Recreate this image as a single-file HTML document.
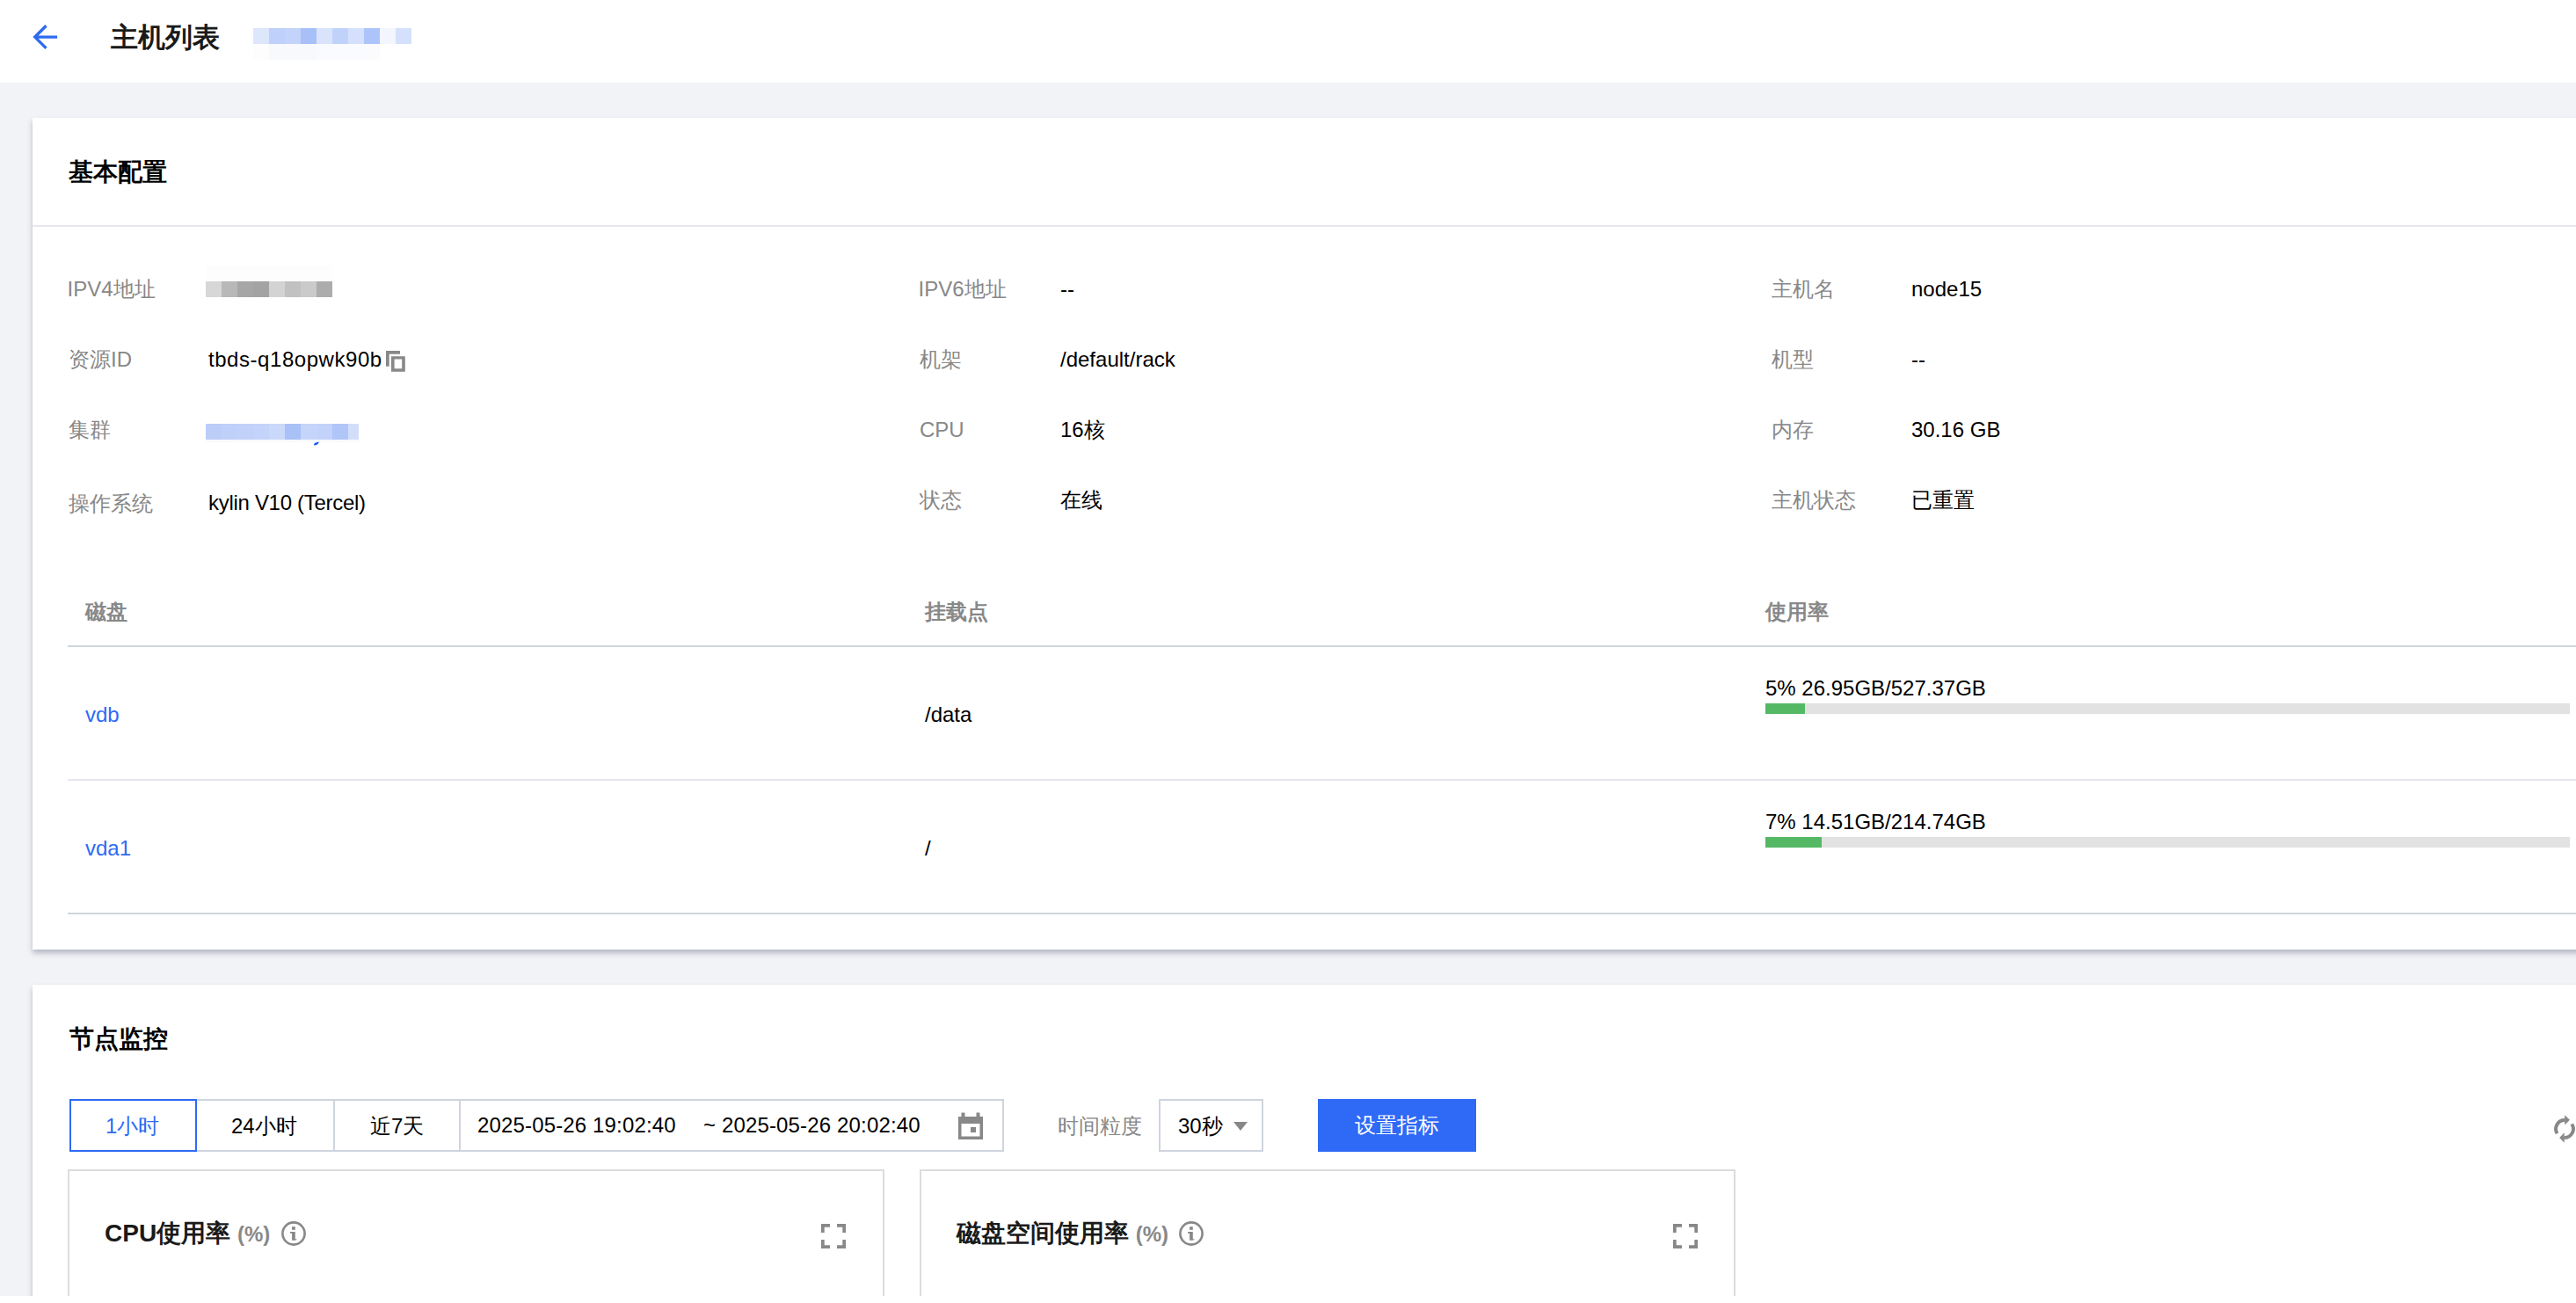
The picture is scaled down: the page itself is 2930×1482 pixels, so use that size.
<!DOCTYPE html>
<html><head><meta charset="utf-8">
<style>
*{box-sizing:border-box;margin:0;padding:0}
html,body{width:2930px;height:1482px;overflow:hidden;background:#fff}
body{position:relative;font-family:"Liberation Sans",sans-serif;color:#000}
.a{position:absolute;white-space:nowrap}
.t{position:absolute;white-space:nowrap;font-size:24px;line-height:24px}
.lb{color:#888}
.vl{color:#000}
#bg{position:absolute;left:0;top:94px;width:2930px;height:1380px;background:#f2f3f7}
.card{position:absolute;background:#fff;box-shadow:0 4px 6px rgba(54,58,80,.32)}
.blk{position:absolute;height:18px;width:18px}
</style></head><body>
<div id="bg"></div>

<!-- header -->
<svg class="a" style="left:34px;top:25px" width="34" height="34" viewBox="0 0 34 34">
<path d="M18.5 4.3 L5.7 17.1 L18.5 29.9 M5.7 17.1 H31.1" fill="none" stroke="#2e6bf0" stroke-width="3.4" stroke-linejoin="miter"/>
</svg>
<div class="a" style="left:126px;top:25px;font-size:31px;line-height:36px;font-weight:bold;color:#1a1a1a">主机列表</div>
<i class="blk" style="left:288px;top:32px;width:18px;height:18px;background:#dde7fb"></i><i class="blk" style="left:306px;top:32px;width:18px;height:18px;background:#bfd0fa"></i><i class="blk" style="left:324px;top:32px;width:18px;height:18px;background:#c3d3fa"></i><i class="blk" style="left:342px;top:32px;width:18px;height:18px;background:#a7c0f8"></i><i class="blk" style="left:360px;top:32px;width:18px;height:18px;background:#d9e4fc"></i><i class="blk" style="left:378px;top:32px;width:18px;height:18px;background:#c1d2fa"></i><i class="blk" style="left:396px;top:32px;width:18px;height:18px;background:#d5e1fc"></i><i class="blk" style="left:414px;top:32px;width:18px;height:18px;background:#adc4fb"></i><i class="blk" style="left:432px;top:32px;width:18px;height:18px;background:#f3f6fe"></i><i class="blk" style="left:450px;top:32px;width:18px;height:18px;background:#d5e1fc"></i><i class="blk" style="left:288px;top:50px;width:18px;height:18px;background:#fdfdfe"></i><i class="blk" style="left:306px;top:50px;width:18px;height:18px;background:#f8f9fd"></i><i class="blk" style="left:324px;top:50px;width:18px;height:18px;background:#f8f9fd"></i><i class="blk" style="left:342px;top:50px;width:18px;height:18px;background:#f8f9fd"></i><i class="blk" style="left:360px;top:50px;width:18px;height:18px;background:#fafbfe"></i><i class="blk" style="left:378px;top:50px;width:18px;height:18px;background:#fafbfe"></i><i class="blk" style="left:396px;top:50px;width:18px;height:18px;background:#fafbfe"></i><i class="blk" style="left:414px;top:50px;width:18px;height:18px;background:#fbfbfe"></i>

<!-- card 1 -->
<div class="card" style="left:37px;top:134px;width:2945px;height:946px"></div>
<div class="a" style="left:78px;top:179px;font-size:28px;line-height:34px;font-weight:bold;color:#000">基本配置</div>
<div class="a" style="left:37px;top:256px;width:2893px;height:2px;background:#e7e8ed"></div>

<!-- info grid -->
<div class="t lb" style="left:76.5px;top:317px">IPV4地址</div>
<i class="blk" style="left:234px;top:302px;width:18px;height:18px;background:#fdfdfd"></i><i class="blk" style="left:252px;top:302px;width:18px;height:18px;background:#fdfdfd"></i><i class="blk" style="left:270px;top:302px;width:18px;height:18px;background:#fdfdfd"></i><i class="blk" style="left:288px;top:302px;width:18px;height:18px;background:#fdfdfd"></i><i class="blk" style="left:306px;top:302px;width:18px;height:18px;background:#fdfdfd"></i><i class="blk" style="left:324px;top:302px;width:18px;height:18px;background:#fdfdfd"></i><i class="blk" style="left:342px;top:302px;width:18px;height:18px;background:#fdfdfd"></i><i class="blk" style="left:360px;top:302px;width:18px;height:18px;background:#fdfdfd"></i><i class="blk" style="left:234px;top:320px;width:18px;height:18px;background:#d7d7d7"></i><i class="blk" style="left:252px;top:320px;width:18px;height:18px;background:#b8b8b8"></i><i class="blk" style="left:270px;top:320px;width:18px;height:18px;background:#a6a6a6"></i><i class="blk" style="left:288px;top:320px;width:18px;height:18px;background:#a3a3a3"></i><i class="blk" style="left:306px;top:320px;width:18px;height:18px;background:#d3d3d3"></i><i class="blk" style="left:324px;top:320px;width:18px;height:18px;background:#c1c1c1"></i><i class="blk" style="left:342px;top:320px;width:18px;height:18px;background:#cacaca"></i><i class="blk" style="left:360px;top:320px;width:18px;height:18px;background:#acacac"></i>
<div class="t lb" style="left:78px;top:397px">资源ID</div>
<div class="t vl" style="left:237px;top:397px;letter-spacing:0.55px">tbds-q18opwk90b</div>
<svg class="a" style="left:439px;top:399px" width="22" height="24" viewBox="0 0 22 24">
<path d="M0 0 H16 V3.7 H3.7 V17.8 H0 Z" fill="#888"/>
<path d="M6 6.2 H21.8 V23.8 H6 Z M9.6 9.6 V20.2 H18.2 V9.6 Z" fill="#888" fill-rule="evenodd"/>
</svg>
<div class="t lb" style="left:78px;top:477px">集群</div>
<i class="blk" style="left:234px;top:482px;width:18px;height:18px;background:#bccdf8"></i><i class="blk" style="left:252px;top:482px;width:18px;height:18px;background:#bfd0f9"></i><i class="blk" style="left:270px;top:482px;width:18px;height:18px;background:#c1d1fa"></i><i class="blk" style="left:288px;top:482px;width:18px;height:18px;background:#c3d3fa"></i><i class="blk" style="left:306px;top:482px;width:18px;height:18px;background:#cad8fa"></i><i class="blk" style="left:324px;top:482px;width:18px;height:18px;background:#a9c1f7"></i><i class="blk" style="left:342px;top:482px;width:18px;height:18px;background:#c5d5fa"></i><i class="blk" style="left:360px;top:482px;width:18px;height:18px;background:#c2d2fa"></i><i class="blk" style="left:378px;top:482px;width:18px;height:18px;background:#b0c6f8"></i><i class="blk" style="left:396px;top:482px;width:12px;height:18px;background:#d2def9"></i>
<i class="a" style="left:234px;top:500px;width:174px;height:3px;background:#f9fafe"></i><svg class="a" style="left:356px;top:502px" width="8" height="6" viewBox="0 0 8 6"><path d="M1 4.4 Q0.8 1.8 3 1.4 L7 0.6 L5.6 3 Q4 4.6 1 4.4 Z" fill="#1a56f0"/></svg>
<div class="t lb" style="left:78px;top:561px">操作系统</div>
<div class="t vl" style="left:237px;top:560px;letter-spacing:-0.3px">kylin V10 (Tercel)</div>

<div class="t lb" style="left:1044.5px;top:317px">IPV6地址</div>
<div class="t vl" style="left:1206px;top:317px">--</div>
<div class="t lb" style="left:1046px;top:397px">机架</div>
<div class="t vl" style="left:1206px;top:397px">/default/rack</div>
<div class="t lb" style="left:1046px;top:477px">CPU</div>
<div class="t vl" style="left:1206px;top:477px">16核</div>
<div class="t lb" style="left:1046px;top:557px">状态</div>
<div class="t vl" style="left:1206px;top:557px">在线</div>

<div class="t lb" style="left:2015px;top:317px">主机名</div>
<div class="t vl" style="left:2174px;top:317px">node15</div>
<div class="t lb" style="left:2015px;top:397px">机型</div>
<div class="t vl" style="left:2174px;top:397px">--</div>
<div class="t lb" style="left:2015px;top:477px">内存</div>
<div class="t vl" style="left:2174px;top:477px">30.16 GB</div>
<div class="t lb" style="left:2015px;top:557px">主机状态</div>
<div class="t vl" style="left:2174px;top:557px">已重置</div>

<!-- disk table -->
<div class="t" style="left:97px;top:684px;font-weight:bold;color:#888">磁盘</div>
<div class="t" style="left:1052px;top:684px;font-weight:bold;color:#888">挂载点</div>
<div class="t" style="left:2008px;top:684px;font-weight:bold;color:#888">使用率</div>
<div class="a" style="left:77px;top:734px;width:2853px;height:2px;background:#cfd5de"></div>

<div class="t" style="left:97px;top:801px;color:#2e6af5">vdb</div>
<div class="t vl" style="left:1052px;top:801px">/data</div>
<div class="t vl" style="left:2008px;top:771px">5% 26.95GB/527.37GB</div>
<div class="a" style="left:2008px;top:800px;width:915px;height:12px;background:#e2e2e2"></div>
<div class="a" style="left:2008px;top:800px;width:45px;height:12px;background:#54b865"></div>
<div class="a" style="left:77px;top:886px;width:2853px;height:2px;background:#e5e7ec"></div>

<div class="t" style="left:97px;top:953px;color:#2e6af5">vda1</div>
<div class="t vl" style="left:1052px;top:953px">/</div>
<div class="t vl" style="left:2008px;top:923px">7% 14.51GB/214.74GB</div>
<div class="a" style="left:2008px;top:952px;width:915px;height:12px;background:#e2e2e2"></div>
<div class="a" style="left:2008px;top:952px;width:64px;height:12px;background:#54b865"></div>
<div class="a" style="left:77px;top:1038px;width:2853px;height:2px;background:#cfd5de"></div>

<!-- card 2 -->
<div class="card" style="left:37px;top:1120px;width:2945px;height:400px"></div>
<div class="a" style="left:79px;top:1165px;font-size:28px;line-height:34px;font-weight:bold;color:#000">节点监控</div>

<!-- segmented -->
<div class="a" style="left:79px;top:1250px;width:1063px;height:60px;border:2px solid #cfd5de"></div>
<div class="a" style="left:379px;top:1250px;width:2px;height:60px;background:#cfd5de"></div>
<div class="a" style="left:522px;top:1250px;width:2px;height:60px;background:#cfd5de"></div>
<div class="a" style="left:79px;top:1250px;width:145px;height:60px;border:2px solid #2e6af5"></div>
<div class="t" style="left:120px;top:1269px;color:#2e6af5">1小时</div>
<div class="t vl" style="left:263px;top:1269px">24小时</div>
<div class="t vl" style="left:421px;top:1269px">近7天</div>
<div class="t vl" style="left:543px;top:1268px;letter-spacing:0.15px">2025-05-26 19:02:40</div>
<div class="t vl" style="left:800px;top:1268px;letter-spacing:0.15px">~ 2025-05-26 20:02:40</div>
<svg class="a" style="left:1090px;top:1265px" width="28" height="32" viewBox="0 0 28 32">
<path d="M0 5 H28 V31 H0 Z M3.5 13 V27.5 H24.5 V13 Z" fill="#888" fill-rule="evenodd"/>
<rect x="3.5" y="0.5" width="4" height="6" fill="#888"/>
<rect x="20.5" y="0.5" width="4" height="6" fill="#888"/>
<rect x="14" y="17" width="6" height="6" fill="#888"/>
</svg>

<div class="t lb" style="left:1203px;top:1269px">时间粒度</div>
<div class="a" style="left:1318px;top:1250px;width:119px;height:60px;border:2px solid #cfd5de"></div>
<div class="t vl" style="left:1340px;top:1269px">30秒</div>
<svg class="a" style="left:1403px;top:1276px" width="16" height="10" viewBox="0 0 16 10"><path d="M0 0 H16 L8 10 Z" fill="#888"/></svg>
<div class="a" style="left:1499px;top:1250px;width:180px;height:60px;background:#2e6af5"></div>
<div class="t" style="left:1541px;top:1268px;color:#fff;font-weight:500">设置指标</div>

<svg class="a" style="left:2903px;top:1266px" width="27" height="36" viewBox="0 0 27 36">
<g fill="none" stroke="#888" stroke-width="4">
<path d="M5.6 23.25 A9.9 9.9 0 0 1 14.5 8.1"/>
<path d="M22.2 12.5 A9.9 9.9 0 0 1 13.5 27.9"/>
</g>
<path d="M14.2 2.3 L19.9 7.8 L14.2 13.5 Z" fill="#888"/>
<path d="M13.7 22.2 L8.2 28 L13.7 33.7 Z" fill="#888"/>
</svg>

<!-- chart boxes -->
<div class="a" style="left:77px;top:1330px;width:929px;height:200px;border:2px solid #dcdcdc"></div>
<div class="a" style="left:1046px;top:1330px;width:928px;height:200px;border:2px solid #dcdcdc"></div>

<div class="a" style="left:119px;top:1387px;font-size:28px;line-height:32px;font-weight:bold;color:#1a1a1a">CPU使用率 <span style="font-size:24px;color:#888">(%)</span></div>
<svg class="a" style="left:320px;top:1389px" width="28" height="28" viewBox="0 0 28 28">
<circle cx="14" cy="14" r="12.6" fill="none" stroke="#888" stroke-width="2.6"/>
<rect x="12.1" y="6.2" width="3.7" height="3.6" fill="#888"/>
<path d="M10 12 H15.8 V20.2 H17.8 Q17 21.8 15 21.8 H12.1 V13.8 H10 Z" fill="#888"/>
</svg>
<svg class="a" style="left:934px;top:1392px" width="28" height="28" viewBox="0 0 28 28">
<path d="M0 0 H10 V3.7 H3.7 V10 H0 Z M28 0 V10 H24.3 V3.7 H18 V0 Z M0 28 V18 H3.7 V24.3 H10 V28 Z M28 28 H18 V24.3 H24.3 V18 H28 Z" fill="#888"/>
</svg>

<div class="a" style="left:1088px;top:1387px;font-size:28px;line-height:32px;font-weight:bold;color:#1a1a1a">磁盘空间使用率 <span style="font-size:24px;color:#888">(%)</span></div>
<svg class="a" style="left:1341px;top:1389px" width="28" height="28" viewBox="0 0 28 28">
<circle cx="14" cy="14" r="12.6" fill="none" stroke="#888" stroke-width="2.6"/>
<rect x="12.1" y="6.2" width="3.7" height="3.6" fill="#888"/>
<path d="M10 12 H15.8 V20.2 H17.8 Q17 21.8 15 21.8 H12.1 V13.8 H10 Z" fill="#888"/>
</svg>
<svg class="a" style="left:1903px;top:1392px" width="28" height="28" viewBox="0 0 28 28">
<path d="M0 0 H10 V3.7 H3.7 V10 H0 Z M28 0 V10 H24.3 V3.7 H18 V0 Z M0 28 V18 H3.7 V24.3 H10 V28 Z M28 28 H18 V24.3 H24.3 V18 H28 Z" fill="#888"/>
</svg>

<!-- bottom white strip -->
<div class="a" style="left:0;top:1474px;width:2930px;height:8px;background:#fff"></div>

</body></html>
